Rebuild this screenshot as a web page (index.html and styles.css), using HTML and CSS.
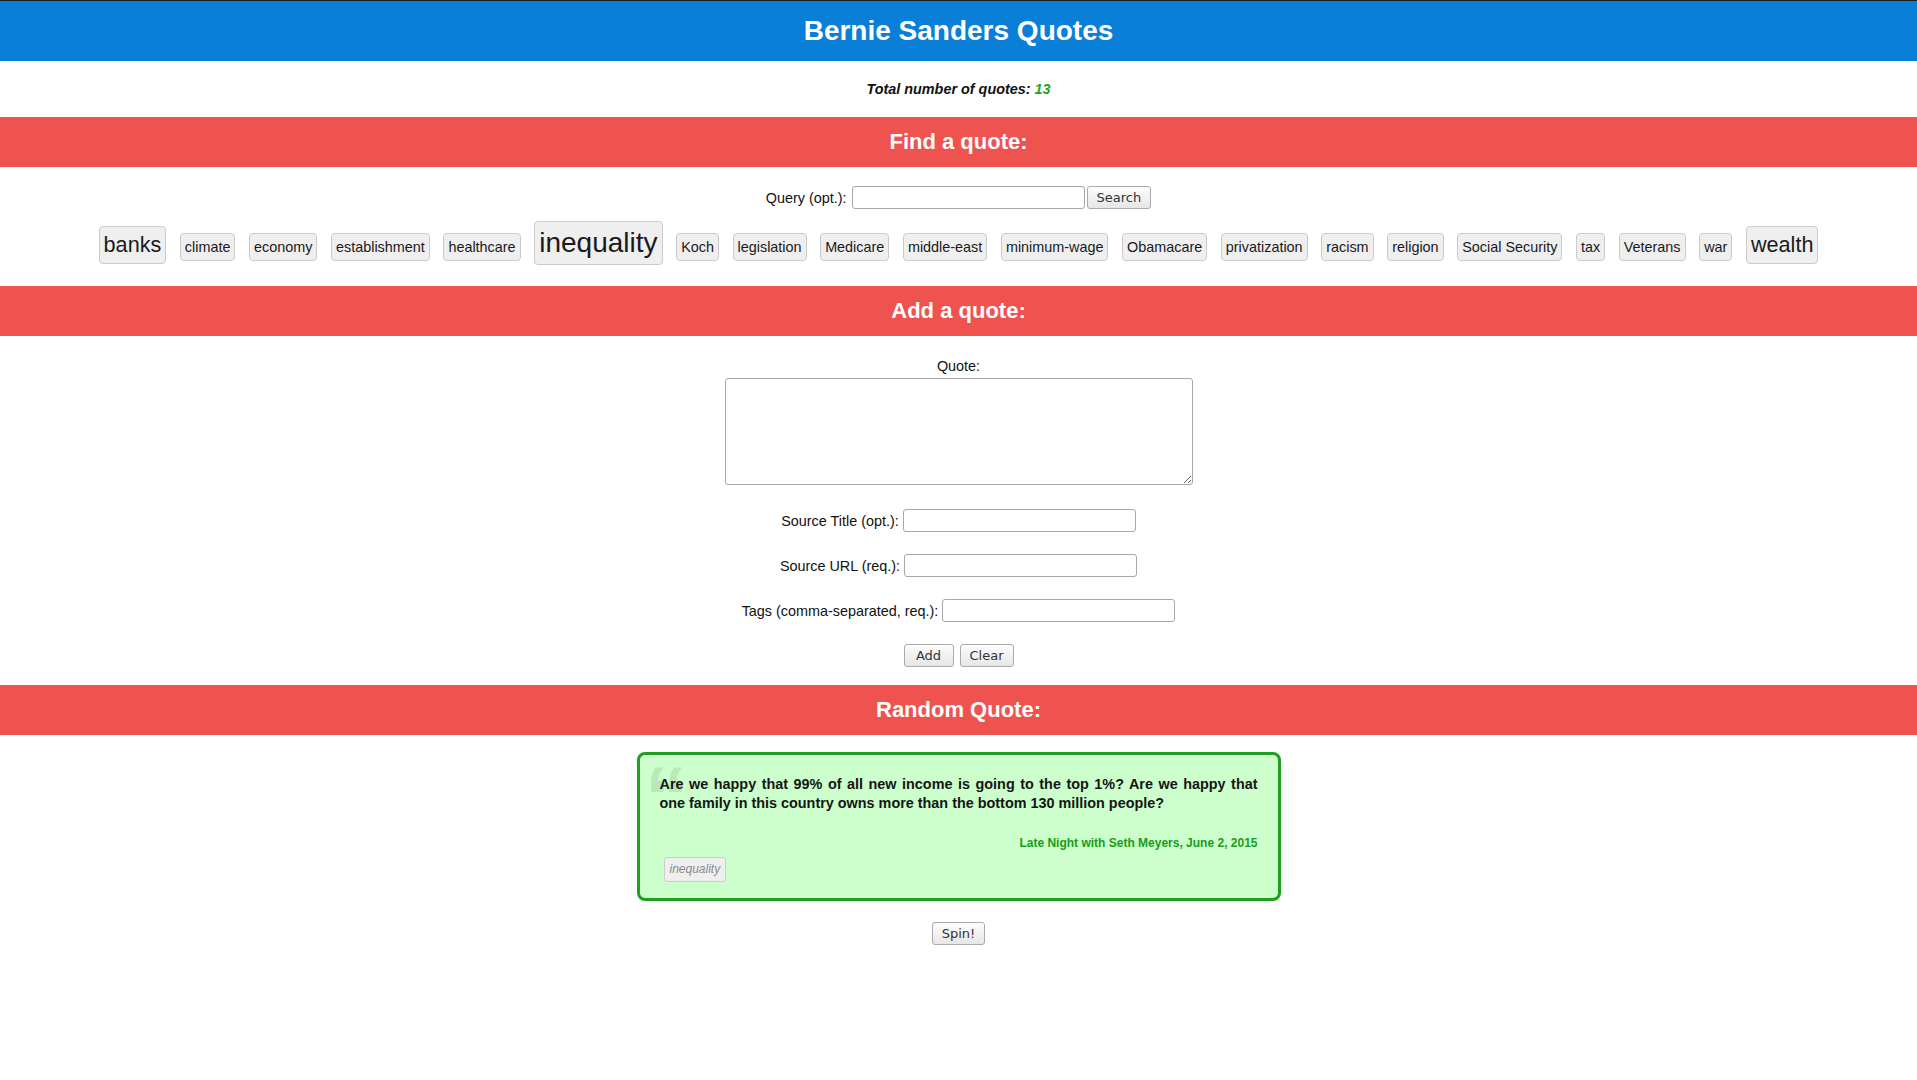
FILE: index.html
```html
<!DOCTYPE html>
<html lang="en">
<head>
<meta charset="utf-8">
<title>Bernie Sanders Quotes</title>
<link rel="stylesheet" href="styles.css">
</head>
<body>
<header class="topbar"><h1>Bernie Sanders Quotes</h1></header>
<p class="total">Total number of quotes: <span class="count">13</span></p>

<h2 class="band">Find a quote:</h2>
<section class="find">
  <div class="query-row">
    <label for="q">Query (opt.):</label>
    <input id="q" class="field" type="text">
    <button class="btn btn-search">Search</button>
  </div>
  <div class="tags">
    <span class="tag t2">banks</span>
    <span class="tag">climate</span>
    <span class="tag">economy</span>
    <span class="tag">establishment</span>
    <span class="tag">healthcare</span>
    <span class="tag t3">inequality</span>
    <span class="tag">Koch</span>
    <span class="tag">legislation</span>
    <span class="tag">Medicare</span>
    <span class="tag">middle-east</span>
    <span class="tag">minimum-wage</span>
    <span class="tag">Obamacare</span>
    <span class="tag">privatization</span>
    <span class="tag">racism</span>
    <span class="tag">religion</span>
    <span class="tag">Social Security</span>
    <span class="tag">tax</span>
    <span class="tag">Veterans</span>
    <span class="tag">war</span>
    <span class="tag t2">wealth</span>
  </div>
</section>

<h2 class="band">Add a quote:</h2>
<section class="add">
  <div class="quote-label">Quote:</div>
  <textarea class="quote-input"></textarea>
  <div class="field-row first">
    <label for="st">Source Title (opt.):</label>
    <input id="st" class="field" type="text">
  </div>
  <div class="field-row">
    <label for="su">Source URL (req.):</label>
    <input id="su" class="field" type="text">
  </div>
  <div class="field-row">
    <label for="tg">Tags (comma-separated, req.):</label>
    <input id="tg" class="field" type="text">
  </div>
  <div class="field-row buttons">
    <button class="btn btn-add">Add</button>
    <button class="btn">Clear</button>
  </div>
</section>

<h2 class="band">Random Quote:</h2>
<section class="random">
  <div class="quote-box">
    <span class="quote-mark">&ldquo;</span>
    <p class="quote-text">Are we happy that 99% of all new income is going to the top 1%? Are we happy that one&nbsp;family in this country owns more than the bottom 130 million people?</p>
    <p class="source">Late Night with Seth Meyers, June 2, 2015</p>
    <div class="qtags"><span class="qtag">inequality</span></div>
  </div>
  <div class="spin-row"><button class="btn">Spin!</button></div>
</section>
</body>
</html>
```

FILE: styles.css
```css
* { box-sizing: border-box; }

body {
  margin: 0;
  font-family: "Liberation Sans", Arial, sans-serif;
  font-size: 14.4px;
  color: #111;
  background: #fff;
}

.topbar {
  border-top: 1px solid #1e1e1e;
  background: #0a7fd8;
  height: 61px;
  display: flex;
  align-items: center;
  justify-content: center;
}

.topbar h1 {
  margin: 0;
  color: #fff;
  font-size: 28px;
  line-height: 1;
  font-weight: bold;
}

.total {
  margin: 0;
  padding: 20px 0;
  line-height: 16px;
  text-align: center;
  font-weight: bold;
  font-style: italic;
}

.count { color: #22a522; }

.band {
  margin: 0;
  height: 50px;
  line-height: 50px;
  background: #ef5350;
  color: #fff;
  text-align: center;
  font-size: 22px;
  font-weight: bold;
}

.find { padding: 19px 0 21px; }

.query-row,
.field-row {
  display: flex;
  justify-content: center;
  align-items: center;
  height: 23px;
}

.query-row label,
.field-row label { margin-right: 4px; }

.query-row label { margin-right: 5px; }

.field {
  width: 233px;
  height: 23px;
  border: 1px solid #a8a8a8;
  border-radius: 3px;
  background: #fff;
  padding: 0 3px;
}

.btn {
  font-family: "DejaVu Sans", sans-serif;
  font-size: 13px;
  color: #333;
  height: 23px;
  padding: 0 9px;
  border: 1px solid #ababab;
  border-radius: 3px;
  background: linear-gradient(#fdfdfd, #e6e6e6);
}

.btn-search { margin-left: 2px; }
.btn-add { min-width: 50px; margin-right: 6px; }

.tags {
  display: flex;
  justify-content: center;
  align-items: baseline;
  gap: 13.6px;
  margin-top: 12px;
}

.tag {
  background: #efefef;
  border: 1px solid #cbcbcb;
  border-radius: 4px;
  padding: 5px 4px;
  color: #1a1a1a;
  font-size: 14.4px;
}

.tag.t2 { font-size: 21.6px; }
.tag.t3 { font-size: 28px; }

.add { padding-bottom: 18px; }

.quote-label {
  margin-top: 22px;
  line-height: 16px;
  text-align: center;
}

.quote-input {
  display: block;
  margin: 4px auto 0;
  width: 468px;
  height: 107px;
  border: 1px solid #a8a8a8;
  border-radius: 3px;
  background: #fff;
}

.field-row { margin-top: 22px; }
.field-row.first { margin-top: 24px; }

.random { padding-bottom: 20px; }

.quote-box {
  position: relative;
  width: 644px;
  margin: 17px auto 0;
  border: 3px solid #1f9e1f;
  border-radius: 8px;
  background: #ccffcc;
  padding: 20px 20px 16px;
}

.quote-mark {
  position: absolute;
  left: 5px;
  top: -2px;
  font-size: 88px;
  line-height: 1;
  font-weight: bold;
  color: #b8e9b6;
}

.quote-text {
  position: relative;
  margin: 0;
  font-weight: bold;
  line-height: 19px;
  text-align: justify;
  color: #151515;
}

.source {
  position: relative;
  margin: 23px 0 0;
  text-align: right;
  font-size: 12px;
  line-height: 14px;
  font-weight: bold;
  color: #1a9c1a;
}

.qtags {
  margin-top: 7px;
  padding-left: 4px;
  display: flex;
}

.qtag {
  font-size: 12px;
  font-style: italic;
  color: #8a8a8a;
  background: #efefef;
  border: 1px solid #cdcdcd;
  border-radius: 3px;
  padding: 4px 5px;
  line-height: 15px;
}

.spin-row {
  display: flex;
  justify-content: center;
  margin-top: 21px;
}
```
